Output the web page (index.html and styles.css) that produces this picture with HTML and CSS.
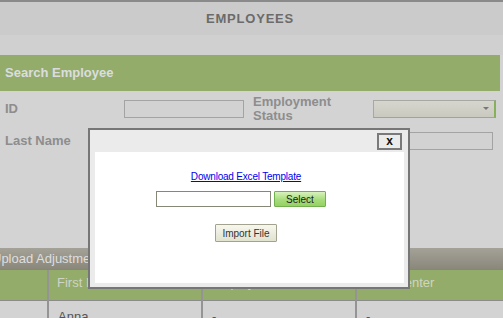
FILE: index.html
```html
<!DOCTYPE html>
<html>
<head>
<meta charset="utf-8">
<link rel="stylesheet" href="styles.css">
</head>
<body>
<div class="topline"></div>
<header class="page-title">EMPLOYEES</header>
<div class="spacer"></div>
<section class="search">
  <div class="search-head">Search Employee</div>
  <div class="search-form">
    <label class="lbl">ID</label>
    <input class="txt" type="text">
    <label class="lbl lbl-2">Employment Status</label>
    <div class="sel"><span class="arrow"></span></div>
    <label class="lbl">Last Name</label>
    <input class="txt" type="text">
    <label class="lbl lbl-2">First Name</label>
    <input class="txt" type="text">
  </div>
</section>
<div class="upload-bar">Upload Adjustment</div>
<table class="grid">
  <colgroup><col class="c1"><col class="c2"><col class="c3"><col class="c4"></colgroup>
  <thead>
    <tr><th></th><th>First Name</th><th>Employee ID</th><th>Cost Center</th></tr>
  </thead>
  <tbody>
    <tr><td></td><td>Anna</td><td>-</td><td>-</td></tr>
  </tbody>
</table>

<div class="modal">
  <div class="modal-bar"><button class="close">x</button></div>
  <div class="modal-body">
    <a class="dl" href="#">Download Excel Template</a>
    <div class="file-row">
      <input class="file-input" type="text">
      <button class="btn-select">Select</button>
    </div>
    <button class="btn-import">Import File</button>
  </div>
</div>
</body>
</html>
```

FILE: styles.css
```css
html, body {
  margin: 0;
  padding: 0;
}
body {
  width: 503px;
  height: 318px;
  overflow: hidden;
  position: relative;
  background: #d3d3d3;
  font-family: "Liberation Sans", Arial, sans-serif;
}
.topline {
  height: 2px;
  background: #8a8a8a;
}
.page-title {
  height: 33px;
  line-height: 33px;
  background: #cbcbcb;
  text-align: center;
  font-weight: bold;
  font-size: 13px;
  letter-spacing: 0.8px;
  color: #6b6b6b;
  padding-right: 3px;
}
.spacer {
  height: 20px;
  background: #d0d0d0;
}
.search {
  width: 500px;
}
.search-head {
  height: 36px;
  line-height: 35px;
  background: #94ac69;
  color: #dadde0;
  font-weight: bold;
  font-size: 13px;
  padding-left: 5px;
}
.search-form {
  display: grid;
  grid-template-columns: 119px 120px 129px 123px;
  grid-template-rows: 28px 28px;
  row-gap: 4px;
  align-items: center;
  padding: 4px 0 93px 5px;
}
.lbl {
  font-weight: bold;
  font-size: 13px;
  line-height: 14px;
  color: #8d8d8d;
}
.lbl-2 {
  padding-left: 9px;
  width: 85px;
}
.txt {
  box-sizing: border-box;
  width: 120px;
  height: 18px;
  margin: 0;
  border: 1px solid #a3a3a3;
  background: #d2d2d2;
}
.sel {
  box-sizing: border-box;
  width: 123px;
  height: 18px;
  border: 1px solid #a8a8a2;
  border-right: 2px solid #86b15a;
  border-bottom: 1px solid #8fb566;
  background: linear-gradient(#d6d6ce, #c9c9c0);
  position: relative;
}
.arrow {
  position: absolute;
  right: 5px;
  top: 6px;
  border-left: 3px solid transparent;
  border-right: 3px solid transparent;
  border-top: 3px solid #777;
}
.upload-bar {
  height: 21px;
  line-height: 21px;
  background: linear-gradient(#a4a298, #8a887b);
  border-bottom: 1px solid #858585;
  color: #dedede;
  font-size: 13px;
  text-indent: -8px;
  white-space: nowrap;
}
.grid {
  width: 503px;
  border-collapse: collapse;
  table-layout: fixed;
}
.c1 { width: 48px; }
.c2 { width: 154px; }
.c3 { width: 154px; }
.c4 { width: 147px; }
.grid th {
  height: 30px;
  box-sizing: border-box;
  background: #94ac69;
  color: #cfd4c6;
  font-weight: normal;
  font-size: 13px;
  line-height: 15px;
  text-align: left;
  vertical-align: top;
  padding: 5px 0 0 8px;
  border-left: 2px solid #949494;
  border-bottom: 1px solid #8b8b8b;
}
.grid th:first-child, .grid td:first-child {
  border-left: none;
}
.grid td {
  height: 30px;
  vertical-align: top;
  padding: 8px 0 0 9px;
  font-size: 13px;
  color: #555;
  border-left: 2px solid #949494;
}
.modal {
  position: absolute;
  z-index: 10;
  left: 88px;
  top: 128px;
  width: 322px;
  height: 161px;
  box-sizing: border-box;
  border: 2px solid #767676;
  background: #ebebeb;
  display: flex;
  flex-direction: column;
}
.modal-bar {
  height: 22px;
  display: flex;
  justify-content: flex-end;
  align-items: flex-start;
  padding: 3px 6px 0 0;
  box-sizing: border-box;
}
.close {
  width: 25px;
  height: 17px;
  box-sizing: border-box;
  border: 2px solid #7a7a7a;
  background: #ebebeb;
  font-family: "Liberation Sans", Arial, sans-serif;
  font-weight: bold;
  font-size: 12px;
  line-height: 11px;
  padding: 0;
  color: #111;
}
.modal-body {
  height: 131px;
  margin: 0 4px 4px 5px;
  background: #ffffff;
  display: flex;
  flex-direction: column;
  align-items: center;
  padding: 18px 7px 0 0;
  box-sizing: border-box;
}
.dl {
  font-size: 10px;
  line-height: 13px;
  letter-spacing: -0.2px;
  color: #0000ee;
}
.file-row {
  display: flex;
  gap: 3px;
  margin: 8px 10px 0 0;
}
.file-input {
  box-sizing: border-box;
  width: 115px;
  height: 16px;
  margin: 0;
  border: 1px solid #878777;
  background: #fff;
}
.btn-select {
  box-sizing: border-box;
  width: 52px;
  height: 16px;
  padding: 0;
  border: 1px solid #72b04e;
  border-radius: 1px;
  background: linear-gradient(#d8f2bd, #a6dc7a 55%, #96d163);
  font-family: "Liberation Sans", Arial, sans-serif;
  font-size: 10px;
  color: #222;
}
.btn-import {
  margin-top: 17px;
  box-sizing: border-box;
  width: 62px;
  height: 18px;
  padding: 0;
  border: 1px solid #a2a28e;
  border-radius: 1px;
  background: linear-gradient(#f7f7ee, #e2e2d0);
  font-family: "Liberation Sans", Arial, sans-serif;
  font-size: 10px;
  color: #333;
}
```
